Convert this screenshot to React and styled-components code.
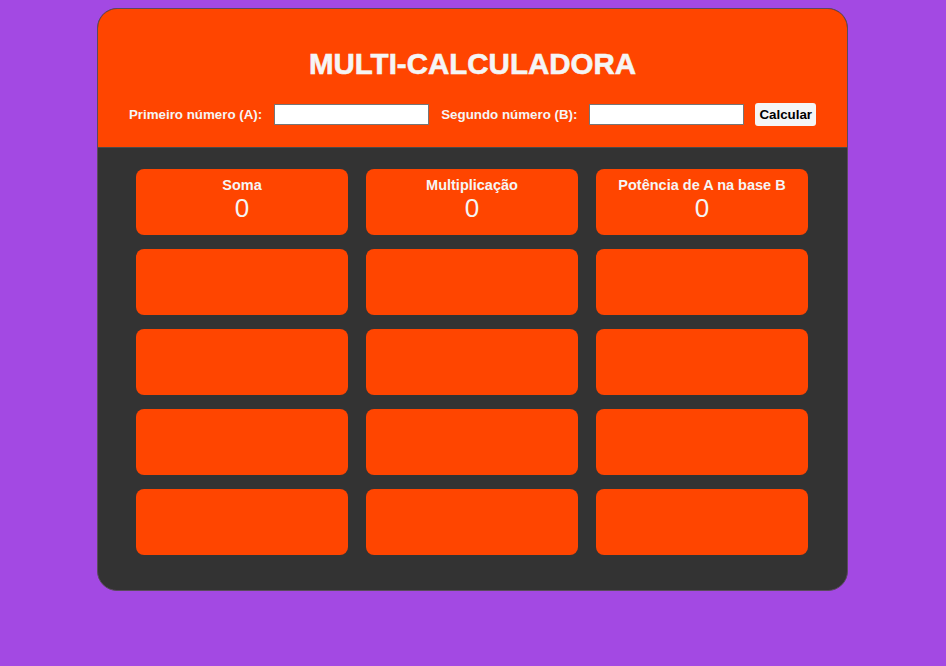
import React, { useState } from 'react';
import styled, { createGlobalStyle } from 'styled-components';

const GlobalStyle = createGlobalStyle`
  body {
    margin: 8px;
    background: #a349e3;
    font-family: "Liberation Sans", Arial, sans-serif;
  }
`;

const Wrapper = styled.div`
  width: 751px;
  margin-left: calc(50% - 376px);
  border: 1px solid #5a4a5e;
  border-radius: 20px;
  overflow: hidden;
  background: #333333;
  box-sizing: border-box;
`;

const Header = styled.header`
  background: #ff4500;
  padding: 38px 0 21px;
  border-bottom: 1px solid #4a4a4a;
  display: flex;
  flex-direction: column;
  align-items: center;
  gap: 23px;
`;

const Title = styled.h1`
  margin: 0;
  font-size: 29.5px;
  line-height: 33px;
  font-weight: 900;
  color: #f5f5f5;
  -webkit-text-stroke: 0.6px #f5f5f5;
`;

const InputRow = styled.div`
  display: flex;
  align-items: center;
  gap: 12px;
`;

const Label = styled.label`
  font-size: 13.33px;
  font-weight: bold;
  color: #f5f5f5;
`;

const NumberInput = styled.input`
  width: 155px;
  height: 21px;
  box-sizing: border-box;
  border: 1px solid #767676;
  padding: 1px 2px;
  background: #fff;
  font-size: 13px;
  outline: none;
`;

const CalcButton = styled.button`
  height: 23px;
  padding: 0 4px;
  margin-left: -1px;
  border: none;
  border-radius: 3px;
  background: #f5f5f5;
  color: #000;
  font-family: "Liberation Sans", Arial, sans-serif;
  font-size: 13.33px;
  font-weight: bold;
  cursor: pointer;
`;

const Grid = styled.main`
  display: grid;
  grid-template-columns: repeat(3, 212px);
  grid-auto-rows: 66px;
  column-gap: 18px;
  row-gap: 14px;
  padding: 21px 38px 35px;
`;

const Card = styled.div`
  background: #ff4500;
  border-radius: 8px;
  padding-top: 8px;
  box-sizing: border-box;
  display: flex;
  flex-direction: column;
  align-items: center;
  color: #f5f5f5;
`;

const CardTitle = styled.span`
  font-size: 14.5px;
  font-weight: bold;
  line-height: 17px;
`;

const CardValue = styled.span`
  font-size: 26px;
  line-height: 30px;
  margin-top: -1px;
`;

export default function App() {
  const [a, setA] = useState('');
  const [b, setB] = useState('');
  const [results, setResults] = useState({ soma: 0, mult: 0, pot: 0 });

  const calcular = () => {
    const x = Number(a) || 0;
    const y = Number(b) || 0;
    setResults({ soma: x + y, mult: x * y, pot: Math.pow(x, y) });
  };

  const cards = [
    { title: 'Soma', value: results.soma },
    { title: 'Multiplicação', value: results.mult },
    { title: 'Potência de A na base B', value: results.pot },
  ];

  return (
    <>
      <GlobalStyle />
      <Wrapper>
        <Header>
          <Title>MULTI-CALCULADORA</Title>
          <InputRow>
            <Label htmlFor="numA">Primeiro número (A):</Label>
            <NumberInput id="numA" value={a} onChange={(e) => setA(e.target.value)} />
            <Label htmlFor="numB">Segundo número (B):</Label>
            <NumberInput id="numB" value={b} onChange={(e) => setB(e.target.value)} />
            <CalcButton onClick={calcular}>Calcular</CalcButton>
          </InputRow>
        </Header>
        <Grid>
          {cards.map((c) => (
            <Card key={c.title}>
              <CardTitle>{c.title}</CardTitle>
              <CardValue>{c.value}</CardValue>
            </Card>
          ))}
          {Array.from({ length: 12 }).map((_, i) => (
            <Card key={i} />
          ))}
        </Grid>
      </Wrapper>
    </>
  );
}
